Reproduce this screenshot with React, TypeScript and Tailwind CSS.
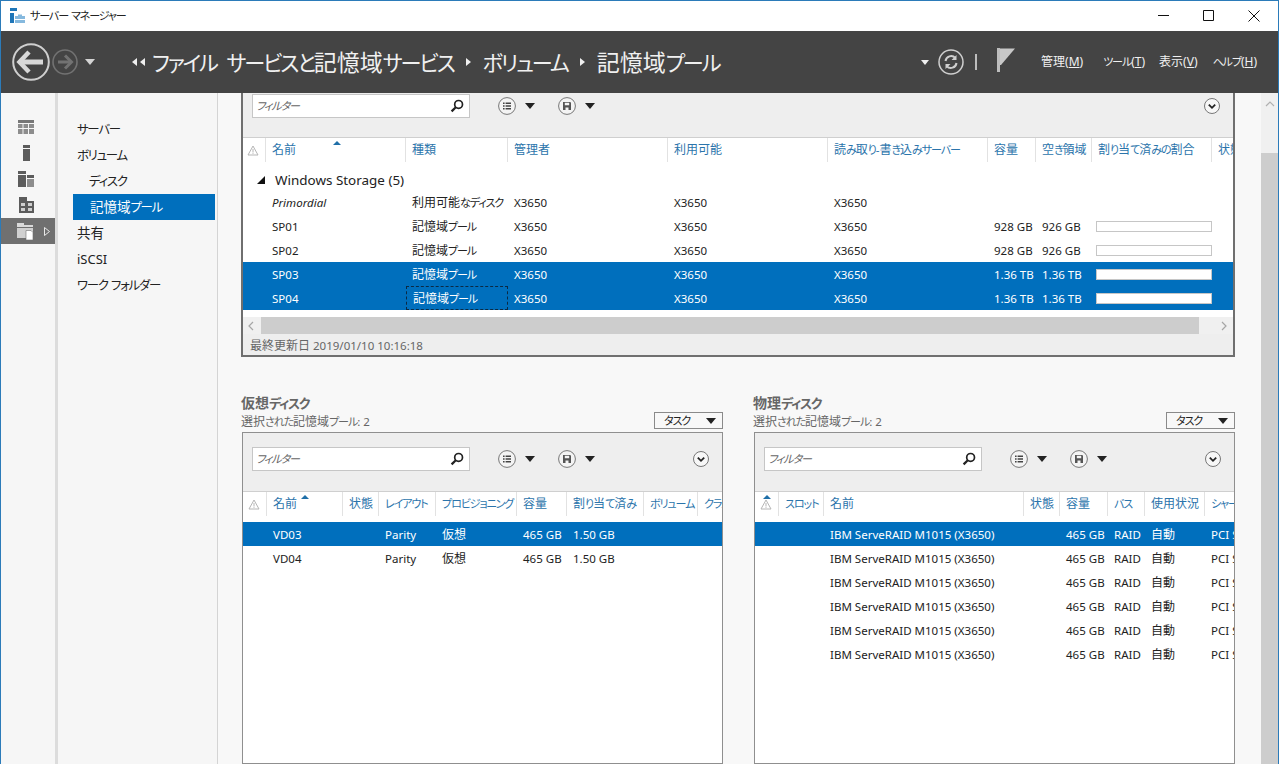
import React from 'react';

const topCols = 'grid-cols-[23px_140px_102px_160px_160px_160px_48px_56px_120px_21px]';
const leftCols = 'grid-cols-[24px_76px_36px_57px_81px_50px_77px_54px_24px]';
const rightCols = 'grid-cols-[24px_45px_200px_36px_48px_37px_60px_29px]';

// Meiryo UI kana are much narrower than Noto's, so kana and latin runs get squeezed
function J({ children }: { children: string }) {
  const runs = children.match(/[\u3040-\u30ff]+|[\x20-\x7e]+|[^\u3040-\u30ff\x20-\x7e]+/g) ?? [];
  return (
    <span>
      {runs.map((run, i) => {
        if (/^[\u3040-\u30ff]/.test(run)) return <span key={i} className="text-[0.92em] tracking-[-0.1em]">{run}</span>;
        if (/^[\x20-\x7e]/.test(run)) return <span key={i} className="text-[0.96em]">{run}</span>;
        return <span key={i}>{run}</span>;
      })}
    </span>
  );
}

const Tri = ({ className = '' }: { className?: string }) => (
  <svg viewBox="0 0 10 6" className={`w-[10px] h-[6px] ${className}`}>
    <path d="M0 0h10L5 6z" fill="currentColor" />
  </svg>
);

function WarnIcon() {
  return (
    <svg viewBox="0 0 12 11" className="w-[12px] h-[11px]">
      <path d="M6 1 11 10H1z" fill="none" stroke="#b5b5b5" />
      <path d="M6 4v3.5M6 8.2v.8" stroke="#b5b5b5" />
    </svg>
  );
}

function ListIcon() {
  return (
    <svg viewBox="0 0 18 18" className="w-[18px] h-[18px]">
      <circle cx="9" cy="9" r="8.4" fill="#f4f4f4" stroke="#777" />
      <path d="M5 5.500h1.600v1.600H5zM5 8.200h1.600v1.600H5zM5 10.900h1.600v1.600H5zM7.600 5.500H13v1.600H7.600zM7.600 8.200H13v1.600H7.600zM7.600 10.900H13v1.600H7.600z" fill="#444" />
    </svg>
  );
}

function SaveIcon() {
  return (
    <svg viewBox="0 0 18 18" className="w-[18px] h-[18px]">
      <circle cx="9" cy="9" r="8.4" fill="#f4f4f4" stroke="#777" />
      <path d="M5 5h7.200L13 5.800V13H5z" fill="#555" />
      <path d="M6.800 5.800h4.400v2.400H6.800zM7.500 10.500h3V13h-3z" fill="#f4f4f4" />
    </svg>
  );
}

function Toolbar({ compact }: { compact?: boolean }) {
  return (
    <div className={`bg-[#eeeeee] flex items-start pl-[9px] pr-[13px] ${compact ? 'h-[44px] pt-[1px]' : 'h-[58px] pt-[14px]'}`}>
      <div className="w-[218px] h-[24px] bg-white border border-[#c6c6c6] flex items-center justify-between pl-[3px] pr-[5px]">
        <span className="italic text-[12px] text-[#666]"><J>フィルター</J></span>
        <svg viewBox="0 0 14 14" className="w-[14px] h-[14px]">
          <circle cx="8.600" cy="5.400" r="3.900" fill="none" stroke="#222" strokeWidth="1.700" />
          <path d="M5.800 8.200 1.600 12.400" stroke="#222" strokeWidth="2.200" />
        </svg>
      </div>
      <div className="flex items-center h-[24px] ml-[28px]">
        <ListIcon />
        <Tri className="ml-[9px] text-[#222]" />
        <div className="ml-[23px]">
          <SaveIcon />
        </div>
        <Tri className="ml-[9px] text-[#222]" />
      </div>
      <div className="ml-auto h-[24px] flex items-center">
        <svg viewBox="0 0 16 16" className="w-[16px] h-[16px]">
          <circle cx="8" cy="8" r="7.500" fill="#f7f7f7" stroke="#777" />
          <path d="M4.800 6.600 8 9.800l3.200-3.200" fill="none" stroke="#222" strokeWidth="1.800" />
        </svg>
      </div>
    </div>
  );
}

function HeaderRow({ cols, labels, sortClass }: { cols: string; labels: string[]; sortClass: string }) {
  return (
    <div className={`relative grid ${cols} h-[31px] bg-white border-t border-[#cfcfcf]`}>
      {labels.map((label, i) => (
        <div key={i} className={`h-[24px] flex items-center overflow-hidden whitespace-nowrap text-[12px] text-[#2b74ab] ${i < labels.length - 1 ? 'border-r border-[#e2e2e2]' : ''} ${i === 0 ? 'justify-center pr-[2px]' : 'pl-[6px]'}`}>
          {i === 0 ? <WarnIcon /> : <J>{label}</J>}
        </div>
      ))}
      <svg viewBox="0 0 8 4" className={`absolute w-[8px] h-[4px] ${sortClass}`}>
        <path d="M0 4 4 0l4 4z" fill="#1f6fa8" />
      </svg>
    </div>
  );
}

function Bar() {
  return <div className="w-[116px] h-[11px] -mt-[2px] -ml-[2px] bg-white border border-[#c6c6c6]" />;
}

function DataRow({ cols, cells, selected, focusCell, italic }: { cols: string; cells: React.ReactNode[]; selected?: boolean; focusCell?: number; italic?: boolean }) {
  return (
    <div className={`grid ${cols} h-[24px] text-[12px] ${selected ? 'bg-[#006fbd] text-white' : 'text-[#222]'}`}>
      {cells.map((c, i) => (
        <div key={i} className={`flex items-center pl-[6px] pt-[2px] whitespace-nowrap overflow-hidden ${italic && i === 1 ? 'italic' : ''} ${focusCell === i ? 'border border-dashed border-[#0b2a44]' : ''}`}>
          {typeof c === 'string' ? <J>{c}</J> : c}
        </div>
      ))}
    </div>
  );
}

const topLabels = ['', '名前', '種類', '管理者', '利用可能', '読み取り-書き込みサーバー', '容量', '空き領域', '割り当て済みの割合', '状態'];
const pools = [
  ['', 'SP01', '記憶域プール', 'X3650', 'X3650', 'X3650', '928 GB', '926 GB', <Bar />, ''],
  ['', 'SP02', '記憶域プール', 'X3650', 'X3650', 'X3650', '928 GB', '926 GB', <Bar />, ''],
  ['', 'SP03', '記憶域プール', 'X3650', 'X3650', 'X3650', '1.36 TB', '1.36 TB', <Bar />, ''],
  ['', 'SP04', '記憶域プール', 'X3650', 'X3650', 'X3650', '1.36 TB', '1.36 TB', <Bar />, ''],
];

function PoolsTile() {
  return (
    <div className="h-[264px] shrink-0 -ml-px border-x-2 border-b-2 border-[#6f6f6f] flex flex-col bg-white">
      <Toolbar compact />
      <HeaderRow cols={topCols} labels={topLabels} sortClass="left-[90px] top-[3px]" />
      <div className="h-[22px] flex items-center text-[14px] text-[#222] pl-[14px] pt-[2px] gap-[10px]">
        <svg viewBox="0 0 8 8" className="w-[8px] h-[8px]">
          <path d="M8 0v8H0z" fill="#111" />
        </svg>
        <J>Windows Storage (5)</J>
      </div>
      <DataRow cols={topCols} italic cells={['', 'Primordial', '利用可能なディスク', 'X3650', 'X3650', 'X3650', '', '', '', '']} />
      <DataRow cols={topCols} cells={pools[0]} />
      <DataRow cols={topCols} cells={pools[1]} />
      <DataRow cols={topCols} selected cells={pools[2]} />
      <DataRow cols={topCols} selected focusCell={2} cells={pools[3]} />
      <div className="h-[7px]" />
      <div className="h-[17px] bg-[#f0f0f0] flex items-center">
        <svg viewBox="0 0 6 10" className="w-[6px] h-[10px] ml-[5px]">
          <path d="M5 1 1 5l4 4" fill="none" stroke="#a6a6a6" strokeWidth="1.200" />
        </svg>
        <div className="h-full w-[938px] ml-[7px] bg-[#cdcdcd]" />
        <svg viewBox="0 0 6 10" className="w-[6px] h-[10px] ml-[22px]">
          <path d="M1 1l4 4-4 4" fill="none" stroke="#a6a6a6" strokeWidth="1.200" />
        </svg>
      </div>
      <div className="flex-1 bg-[#eeeeee] flex items-center pl-[7px] pt-[2px] text-[12px] text-[#666]"><J>最終更新日 2019/01/10 10:16:18</J></div>
    </div>
  );
}

function TileHead({ title }: { title: string }) {
  return (
    <div className="h-[38px] flex items-end justify-between pb-[2px]">
      <div className="-ml-px">
        <div className="text-[14px] leading-[18px] font-bold text-[#666]"><J>{title}</J></div>
        <div className="text-[12px] leading-[17px] pt-[1px] text-[#666]"><J>選択された記憶域プール: 2</J></div>
      </div>
      <div className="w-[69px] h-[17px] mb-[1px] border border-[#8a8a8a] bg-[#f8f8f8] flex items-center justify-between pl-[9px] pr-[6px] text-[12px] text-[#222]">
        <J>タスク</J>
        <Tri className="text-[#222]" />
      </div>
    </div>
  );
}

const vdLabels = ['', '名前', '状態', 'レイアウト', 'プロビジョニング', '容量', '割り当て済み', 'ボリューム', 'クラスター'];
const pdLabels = ['', 'スロット', '名前', '状態', '容量', 'バス', '使用状況', 'シャーシ'];
const pdRow = ['', '', 'IBM ServeRAID M1015 (X3650)', '', '465 GB', 'RAID', '自動', 'PCI Slot'];

function DiskTile({ title, cols, labels, sortClass, children }: { title: string; cols: string; labels: string[]; sortClass: string; children: React.ReactNode }) {
  return (
    <div className="flex flex-col min-h-0">
      <TileHead title={title} />
      <div className="flex-1 border border-[#8f8f8f] bg-white flex flex-col overflow-hidden">
        <Toolbar />
        <HeaderRow cols={cols} labels={labels} sortClass={sortClass} />
        {children}
      </div>
    </div>
  );
}

function NavIcon({ kind }: { kind: number }) {
  const d = '#5c5c5c';
  const l = '#8d8d8d';
  return (
    <svg viewBox="0 0 18 18" className="w-[18px] h-[18px]">
      {kind === 0 && (
        <g>
          <path d="M1 2h16v3H1z" fill="#777" />
          <path d="M1 6h4.500v4H1zM6.500 6H11v4H6.500zM12 6h5v4h-5zM1 11h4.500v5H1zM6.500 11H11v5H6.500zM12 11h5v5h-5z" fill={l} />
        </g>
      )}
      {kind === 1 && (
        <g>
          <path d="M6 1h7v3H6z" fill={d} />
          <path d="M6 5h7v12H6z" fill={d} />
        </g>
      )}
      {kind === 2 && (
        <g>
          <path d="M1 1h8v3H1z" fill={d} />
          <path d="M1 5h8v12H1z" fill={d} />
          <path d="M10 5h7v3h-7z" fill={d} />
          <path d="M10 9h7v8h-7z" fill={l} />
        </g>
      )}
      {kind === 3 && (
        <g>
          <path d="M2 1h8v4h7v12H2z" fill={d} />
          <path d="M4 7h4v3H4zM4 12h4v3H4zM11 7h4v3h-4zM11 12h4v3h-4z" fill="#cfcfcf" />
        </g>
      )}
      {kind === 4 && (
        <g>
          <path d="M0 1h7v2h9v2H0z" fill="#dadada" />
          <path d="M0 6h16v10H0z" fill="#d0d0d0" />
          <path d="M9 8.500h5l2 2V18H9z" fill="#fff" stroke="#707070" strokeWidth=".6" />
        </g>
      )}
    </svg>
  );
}

function MenuItem({ label, k, className }: { label: string; k: string; className: string }) {
  return (
    <span className={`text-[12px] text-[#f0f0f0] ${className}`}>
      <J>{label}</J>(<span className="underline">{k}</span>)
    </span>
  );
}

function Crumb() {
  return (
    <svg viewBox="0 0 5 8" className="w-[5px] h-[8px] mx-[12px]">
      <path d="M0 0l5 4-5 4z" fill="#f0f0f0" />
    </svg>
  );
}

export default function App() {
  const navItems = ['サーバー', 'ボリューム', 'ディスク', '記憶域プール', '共有', 'iSCSI', 'ワーク フォルダー'];
  return (
    <div className="w-[1279px] h-[764px] overflow-hidden flex flex-col border-x border-t border-[#2b7bb9] bg-white font-['Noto_Sans','Noto_Sans_CJK_JP',sans-serif] [font-feature-settings:'palt']">
      <div className="h-[30px] shrink-0 flex items-center pl-[9px] text-[12px] text-[#222]">
        <svg viewBox="0 0 15 16" className="w-[15px] h-[16px]">
          <path d="M0 0h7v3H0z" fill="#1f76b8" />
          <path d="M0 5h4v10H0z" fill="#1f76b8" />
          <path d="M5 8h3V6.500h4V8h3v7H5z" fill="#86b9de" />
          <path d="M5 11h10v1H5z" fill="#fff" />
        </svg>
        <span className="ml-[5px]"><J>サーバー マネージャー</J></span>
        <div className="ml-auto flex items-center">
          <svg viewBox="0 0 45 12" className="w-[45px] h-[12px]"><path d="M0 5.500h11" stroke="#111" /></svg>
          <svg viewBox="0 0 45 12" className="w-[45px] h-[12px]"><path d="M.5.500h10v10H.500z" fill="none" stroke="#111" /></svg>
          <svg viewBox="0 0 30 12" className="w-[30px] h-[12px]"><path d="M.5.500l11 11M11.500.500l-11 11" stroke="#111" /></svg>
        </div>
      </div>

      <div className="h-[62px] shrink-0 bg-[#444444] flex items-center pl-[11px]">
        <svg viewBox="0 0 38 38" className="w-[38px] h-[38px]">
          <circle cx="19" cy="19" r="17.800" fill="none" stroke="#cfcfcf" strokeWidth="2" />
          <path d="M7 19h24" stroke="#d8d8d8" strokeWidth="5" />
          <path d="M17 9 7.500 19 17 29" fill="none" stroke="#d8d8d8" strokeWidth="4.500" />
        </svg>
        <svg viewBox="0 0 26 26" className="w-[26px] h-[26px] ml-[2px]">
          <circle cx="13" cy="13" r="12" fill="none" stroke="#727272" strokeWidth="1.600" />
          <path d="M6 13h13" stroke="#727272" strokeWidth="3" />
          <path d="M13 6.500 19.500 13 13 19.500" fill="none" stroke="#727272" strokeWidth="3" />
        </svg>
        <Tri className="ml-[7px] text-[#d4d4d4]" />
        <div className="flex items-center ml-[37px] text-[#f0f0f0] text-[23px] whitespace-nowrap">
          <svg viewBox="0 0 13 8" className="w-[13px] h-[8px]">
            <path d="M5 0v8L0 4zM13 0v8L8 4z" fill="#f0f0f0" />
          </svg>
          <span className="ml-[7px] [word-spacing:4px]"><J>ファイル サービスと記憶域サービス</J></span>
          <Crumb />
          <J>ボリューム</J>
          <Crumb />
          <J>記憶域プール</J>
        </div>
        <div className="ml-auto flex items-center pr-[21px]">
          <svg viewBox="0 0 8 5" className="w-[8px] h-[5px]"><path d="M0 0h8L4 5z" fill="#f0f0f0" /></svg>
          <svg viewBox="0 0 26 26" className="w-[26px] h-[26px] ml-[9px]">
            <circle cx="13" cy="13" r="12" fill="none" stroke="#cfcfcf" strokeWidth="1.500" />
            <path d="M7.500 12a5.700 5.700 0 0 1 9.800-3.100M18.500 14a5.700 5.700 0 0 1-9.800 3.100" fill="none" stroke="#cfcfcf" strokeWidth="2" />
            <path d="M18.500 6v5h-5zM7.500 20v-5h5z" fill="#cfcfcf" />
          </svg>
          <div className="w-[2px] h-[16px] bg-[#bdbdbd] ml-[11px]" />
          <svg viewBox="0 0 18 24" className="w-[18px] h-[24px] ml-[20px] -mt-[4px]">
            <path d="M0 0h3v24H0z" fill="#bdbdbd" />
            <path d="M3 .5h15L4 17H3z" fill="#c8c8c8" />
          </svg>
          <MenuItem label="管理" k="M" className="ml-[26px]" />
          <MenuItem label="ツール" k="T" className="ml-[20px]" />
          <MenuItem label="表示" k="V" className="ml-[14px]" />
          <MenuItem label="ヘルプ" k="H" className="ml-[15px]" />
        </div>
      </div>

      <div className="flex-1 flex min-h-0">
        <div className="w-[54px] shrink-0 bg-[#f6f6f6] pt-[21px] flex flex-col">
          {[0, 1, 2, 3, 4].map((k) => (
            <div key={k} className={`h-[26px] flex items-center pl-[16px] ${k === 4 ? 'bg-[#707070]' : ''}`}>
              <NavIcon kind={k} />
              {k === 4 && (
                <svg viewBox="0 0 6 9" className="w-[6px] h-[9px] ml-[9px]">
                  <path d="M.5.500 5.500 4.500.5 8.500z" fill="none" stroke="#e8e8e8" />
                </svg>
              )}
            </div>
          ))}
        </div>
        <div className="w-[3px] shrink-0 bg-[#dcdcdc]" />
        <div className="w-[160px] shrink-0 bg-[#f6f6f6] border-r border-[#d4d4d4] pt-[23px] pl-[15px] pr-[2px] text-[13.500px] text-[#222]">
          {navItems.map((item, i) => (
            <div key={item} className={`h-[26px] flex items-center ${i === 2 ? 'pl-[16px]' : i === 3 ? 'pl-[17px]' : 'pl-[4px]'} ${i === 3 ? 'bg-[#006fbd] text-white' : ''}`}>
              <J>{item}</J>
            </div>
          ))}
        </div>

        <div className="flex-1 bg-[#f8f8f8] flex min-w-0">
          <div className="w-[1043px] pl-[24px] pr-[26px] flex flex-col">
            <PoolsTile />
            <div className="flex-1 min-h-0 grid grid-cols-[481px_481px] gap-x-[31px] pt-[37px]">
              <DiskTile title="仮想ディスク" cols={leftCols} labels={vdLabels} sortClass="left-[58px] top-[3px]">
                <DataRow cols={leftCols} selected cells={['', 'VD03', '', 'Parity', '仮想', '465 GB', '1.50 GB', '', '']} />
                <DataRow cols={leftCols} cells={['', 'VD04', '', 'Parity', '仮想', '465 GB', '1.50 GB', '', '']} />
              </DiskTile>
              <DiskTile title="物理ディスク" cols={rightCols} labels={pdLabels} sortClass="left-[8px] top-[3px]">
                {[0, 1, 2, 3, 4, 5].map((i) => (
                  <DataRow key={i} cols={rightCols} selected={i === 0} cells={pdRow} />
                ))}
              </DiskTile>
            </div>
          </div>
          <div className="w-[18px] shrink-0 bg-[#f0f0f0] flex flex-col">
            <div className="h-[60px] flex justify-center pt-[8px]">
              <svg viewBox="0 0 10 6" className="w-[10px] h-[6px]">
                <path d="M1 5l4-4 4 4" fill="none" stroke="#b0b0b0" strokeWidth="1.200" />
              </svg>
            </div>
            <div className="flex-1 bg-[#cdcdcd]" />
          </div>
        </div>
      </div>
    </div>
  );
}
